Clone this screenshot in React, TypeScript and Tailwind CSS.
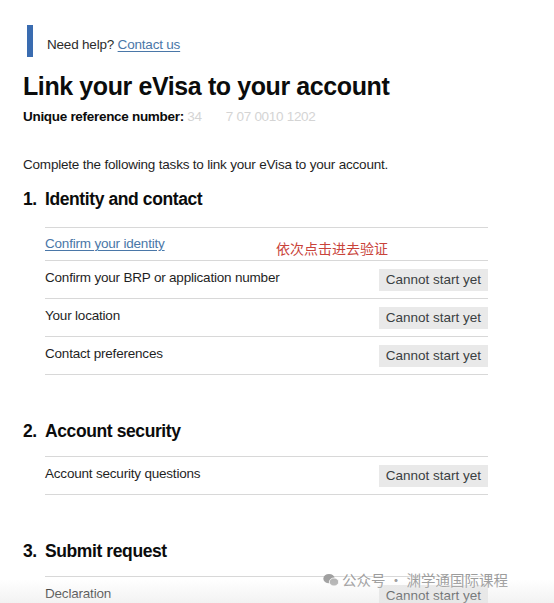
import { useState } from 'react';

type Task = { label: string; status?: string; link?: boolean };

const sections: { num: string; title: string; tasks: Task[] }[] = [
  {
    num: '1.',
    title: 'Identity and contact',
    tasks: [
      { label: 'Confirm your identity', link: true },
      { label: 'Confirm your BRP or application number', status: 'Cannot start yet' },
      { label: 'Your location', status: 'Cannot start yet' },
      { label: 'Contact preferences', status: 'Cannot start yet' },
    ],
  },
  {
    num: '2.',
    title: 'Account security',
    tasks: [{ label: 'Account security questions', status: 'Cannot start yet' }],
  },
  {
    num: '3.',
    title: 'Submit request',
    tasks: [{ label: 'Declaration', status: 'Cannot start yet' }],
  },
];

function TaskRow({ task, note }: { task: Task; note?: string }) {
  return (
    <li
      className={
        'relative flex items-center justify-between border-b border-[#d8d8d8] ' +
        (task.status ? 'h-[38px]' : 'h-[33px]')
      }
    >
      {task.link ? (
        <a href="#" className="text-[13.5px] tracking-[-0.2px] text-[#4a77a8] underline decoration-1 underline-offset-2">
          {task.label}
        </a>
      ) : (
        <span className="-mt-[3px] text-[13.5px] tracking-[-0.2px] text-[#1f1f1f]">{task.label}</span>
      )}
      {note && (
        <span className="absolute left-[231px] top-[10px] text-[14px] leading-[20px] text-[#c9433a] [font-family:'Noto_Sans_CJK_SC',sans-serif]">
          {note}
        </span>
      )}
      {task.status && (
        <span className="bg-[#e9e9e9] px-[7px] text-[13.5px] leading-[22px] text-[#3a3f42]">{task.status}</span>
      )}
    </li>
  );
}

export default function App() {
  const [sectionsState] = useState(sections);

  return (
    <div className="relative h-[603px] w-[554px] overflow-hidden bg-white text-[#0b0c0c] [font-family:'Liberation_Sans',Arial,sans-serif]">
      <div className="px-[23px] pt-[25px]">
        {/* Help banner */}
        <div className="ml-[4px] flex h-[32px] items-center border-l-[6px] border-[#3a6cb0] pl-[14px] pt-[9px] text-[13.5px] tracking-[-0.2px] text-[#2b2b2b]">
          Need help?&nbsp;
          <a href="#" className="text-[#4a77a8] underline decoration-1 underline-offset-2">
            Contact us
          </a>
        </div>

        <h1 className="mt-[14px] text-[25px] font-bold leading-[30px] tracking-[-0.4px]">
          Link your eVisa to your account
        </h1>
        <p className="mt-[6px] text-[13.5px] font-bold leading-[20px] tracking-[-0.3px]">
          Unique reference number:{' '}
          <span className="font-normal text-[#d4d4d4]">34 &nbsp; &nbsp; &nbsp; 7 07 0010 1202</span>
        </p>

        <p className="mt-[28px] text-[13.5px] leading-[20px] tracking-[-0.2px] text-[#1f1f1f]">
          Complete the following tasks to link your eVisa to your account.
        </p>

        {sectionsState.map((s, i) => (
          <section key={s.num} className={i === 0 ? 'mt-[12px]' : 'mt-[44px]'}>
            <h2 className="flex text-[17.5px] font-bold leading-[24px] tracking-[-0.4px]">
              <span className="w-[22px]">{s.num}</span>
              {s.title}
            </h2>
            <ul className={'ml-[22px] mr-[43px] border-t border-[#d8d8d8] ' + (i === 0 ? 'mt-[16px]' : 'mt-[13px]')}>
              {s.tasks.map((t, j) => (
                <TaskRow key={t.label} task={t} note={i === 0 && j === 0 ? '依次点击进去验证' : undefined} />
              ))}
            </ul>
          </section>
        ))}
      </div>

      {/* watermark */}
      <div className="absolute left-[323px] top-[569px] flex items-center gap-[3px] text-[14.5px] leading-[22px] text-[#9c9c9c] [font-family:'Noto_Sans_CJK_SC',sans-serif] [text-shadow:0_0_3px_#ffffff]">
        <svg width="16" height="14" viewBox="0 0 24 20" fill="#a0a0a0">
          <ellipse cx="9" cy="8" rx="8.5" ry="7" />
          <ellipse cx="16.5" cy="13" rx="7" ry="6" fill="#b4b4b4" stroke="#ffffff" strokeWidth="1.2" />
        </svg>
        <span>公众号 · 渊学通国际课程</span>
      </div>
      <div className="pointer-events-none absolute inset-x-0 bottom-0 h-[24px] bg-gradient-to-b from-transparent to-[#e6e6e6]/50" />
    </div>
  );
}
